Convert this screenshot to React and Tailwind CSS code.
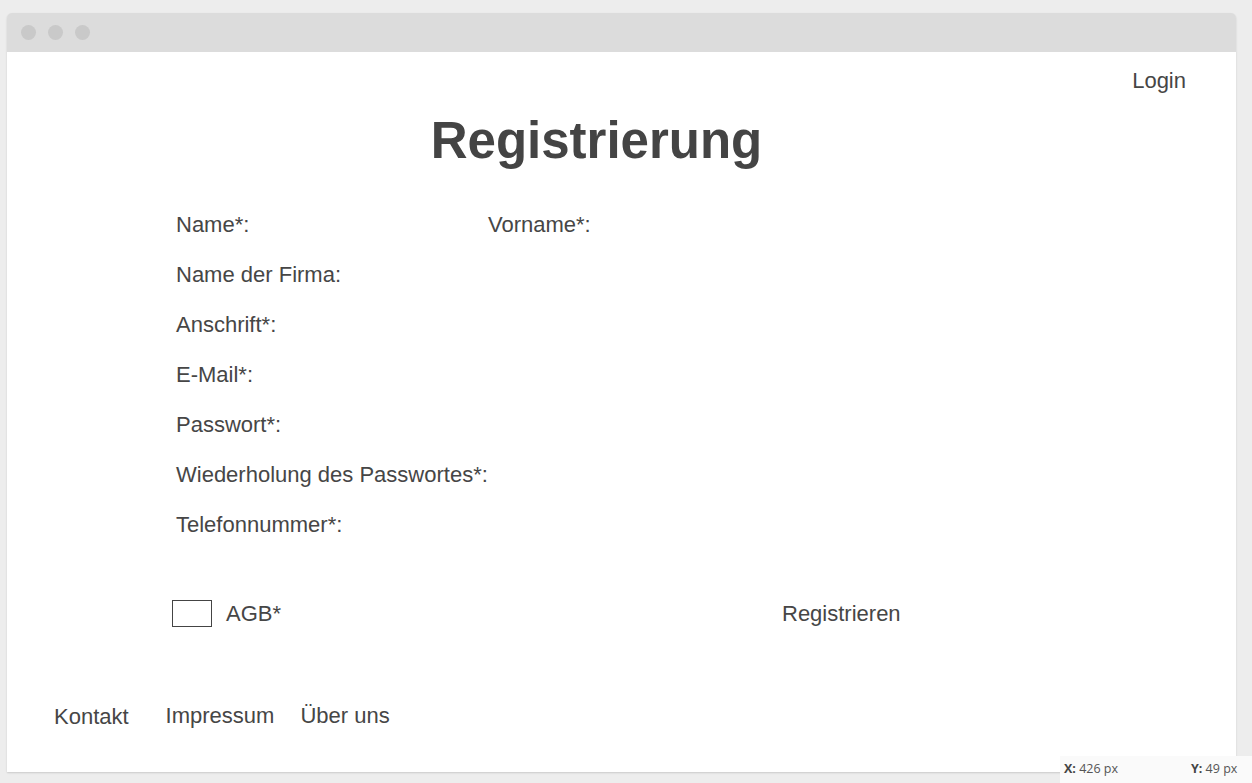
import React from "react";

export default function App() {
  const labels = [
    "Name der Firma:",
    "Anschrift*:",
    "E-Mail*:",
    "Passwort*:",
    "Wiederholung des Passwortes*:",
    "Telefonnummer*:",
  ];
  return (
    <div
      className="relative w-[1252px] h-[783px] bg-[#ededed] pt-[13px] pl-[7px] overflow-hidden text-[#464646] font-['Liberation_Sans',Arial,sans-serif]"
    >
      <div className="w-[1229px] h-[759px] flex flex-col rounded-t-[5px] overflow-hidden shadow-[0_1px_2px_rgba(0,0,0,0.15)]">
        <div className="h-[39px] bg-[#dcdcdc] flex items-center gap-[12px] pl-[14px] shrink-0">
          <span className="w-[15px] h-[15px] rounded-full bg-[#c9c9c9]" />
          <span className="w-[15px] h-[15px] rounded-full bg-[#c9c9c9]" />
          <span className="w-[15px] h-[15px] rounded-full bg-[#c9c9c9]" />
        </div>
        <div className="flex-1 bg-white flex flex-col text-[22px]">
          <div className="h-[56px] flex items-center justify-end pr-[50px]">
            <span>Login</span>
          </div>
          <div className="h-[64px] flex items-center justify-center pr-[50px]">
            <h1 className="text-[51px] font-bold leading-none text-[#444444]">Registrierung</h1>
          </div>
          <div className="mt-[27px] pl-[169px] flex flex-col">
            <div className="h-[50px] flex items-center">
              <span className="w-[312px]">Name*:</span>
              <span>Vorname*:</span>
            </div>
            {labels.map((l) => (
              <div key={l} className="h-[50px] flex items-center">
                <span>{l}</span>
              </div>
            ))}
          </div>
          <div className="mt-[44px] h-[40px] pl-[165px] flex items-center">
            <span className="w-[40px] h-[27px] border border-[#444444] bg-white" />
            <span className="ml-[14px] w-[556px]">AGB*</span>
            <span className="mt-[1px]">Registrieren</span>
          </div>
          <div className="mt-[63px] h-[40px] pl-[47px] flex items-center">
            <span className="mt-[1px]">Kontakt</span>
            <span className="ml-[37px] -mt-[1px]">Impressum</span>
            <span className="ml-[26px] -mt-[1px]">Über uns</span>
          </div>
        </div>
      </div>
      <div className="absolute right-0 bottom-0 w-[192px] h-[27px] bg-[#fafafa] flex items-center pl-[4px] text-[12.5px] text-[#555555] font-['Open_Sans',sans-serif]">
        <span className="w-[127px]">
          <b className="text-[#444444]">X:</b> 426 px
        </span>
        <span>
          <b className="text-[#444444]">Y:</b> 49 px
        </span>
      </div>
    </div>
  );
}
